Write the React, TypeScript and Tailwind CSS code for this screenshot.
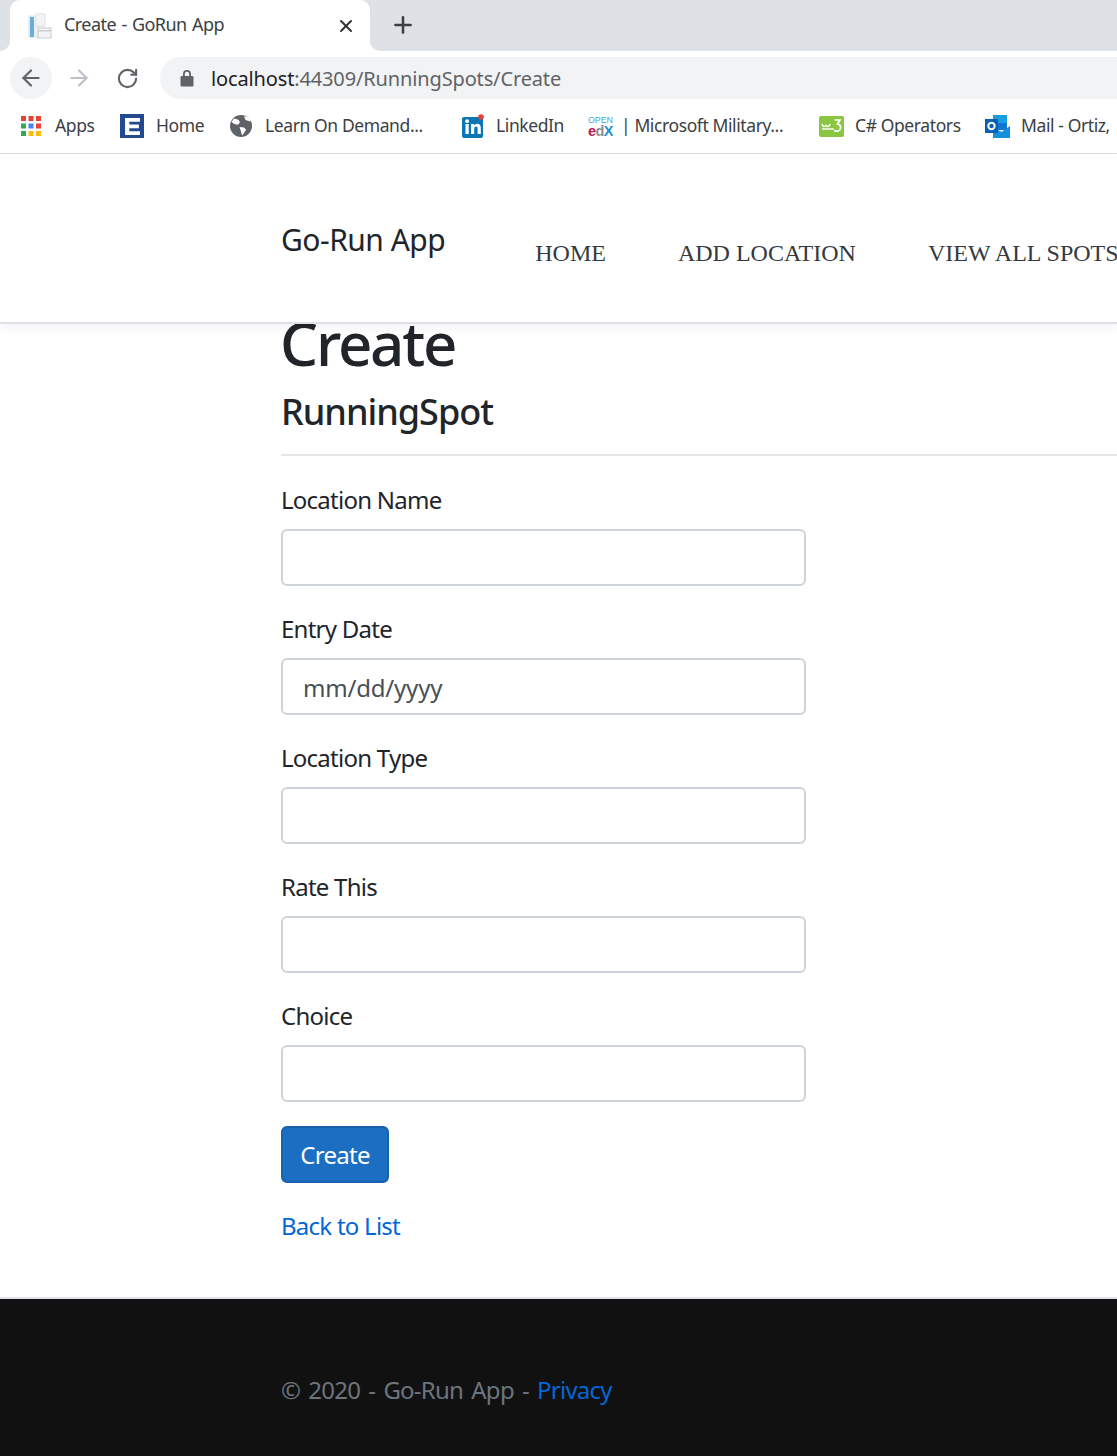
import React from 'react';
import { ArrowLeft, ArrowRight, RotateCw, X, Plus } from 'lucide-react';

const sans = "font-['Noto_Sans',sans-serif]";

const AppsIcon = () => (
  <svg width="20" height="20" viewBox="0 0 20 20">
    {[
      ['#ea4335', '#ea4335', '#ea4335'],
      ['#34a853', '#4285f4', '#ea4335'],
      ['#34a853', '#fbbc05', '#fbbc05'],
    ].map((row, y) =>
      row.map((c, x) => <rect key={`${x}-${y}`} x={x * 7.5} y={y * 7.5} width="5" height="5" fill={c} />)
    )}
  </svg>
);

const HomeIcon = () => (
  <div className="flex h-[24px] w-[24px] items-center justify-center bg-[#234a8f]">
    <svg width="15" height="17" viewBox="0 0 14 16">
      <path d="M0 0h14v3.5H4v2.6h9v3.6H4v2.8h10V16H0z" fill="#fff" />
    </svg>
  </div>
);

const GlobeIcon = () => (
  <svg width="22" height="22" viewBox="0 0 22 22">
    <circle cx="11" cy="11" r="11" fill="#5f6368" />
    <path d="M4 3.500l4.500 1.200 1.500 2.600-2 2.400-3.600-.7L1.500 7zM9.500 12l4.600.6 2 2.200-2.400 3.600-1.600 2-1.400-4.600zM14 1.500l1.500 3.500 4.800 1.600.4-1.600L17 1.600z" fill="#fff" />
  </svg>
);

const LinkedInIcon = () => (
  <svg width="24" height="24" viewBox="0 0 24 24">
    <rect x="1" y="3" width="21" height="21" rx="2" fill="#0a76b4" />
    <rect x="4.500" y="10" width="3.200" height="10" fill="#fff" />
    <circle cx="6.100" cy="7.200" r="1.900" fill="#fff" />
    <path d="M10 10h3v1.500c.7-1.100 1.800-1.800 3.200-1.800 2.600 0 3.600 1.700 3.600 4.400V20h-3.200v-5.200c0-1.300-.4-2.200-1.600-2.200s-1.800 1-1.800 2.300V20H10z" fill="#fff" />
    <circle cx="20" cy="3" r="2.800" fill="#e8413b" />
  </svg>
);

const EdxIcon = () => (
  <svg width="25" height="22" viewBox="0 0 25 22">
    <text x="12.500" y="7.500" textAnchor="middle" fontFamily="'Liberation Sans', sans-serif" fontSize="8.800" fill="#3fa9e0">OPEN</text>
    <text x="0" y="20.500" fontFamily="'Liberation Sans', sans-serif" fontSize="14.500" fontWeight="700" letterSpacing="-0.6">
      <tspan fill="#b3195b">e</tspan>
      <tspan fill="#8f8f8f">d</tspan>
      <tspan fill="#1f8fd6">X</tspan>
    </text>
  </svg>
);

const W3Icon = () => (
  <svg width="25" height="21" viewBox="0 0 25 21">
    <rect width="25" height="21" rx="2" fill="#8ac640" />
    <path d="M3 8c.6 3 2.600 3.200 4 1.400 1.400 1.800 3.400 1.600 4-1.400" fill="none" stroke="#fff" strokeWidth="1.500" />
    <path d="M3 13h12" stroke="#fff" strokeWidth="1.400" />
    <path d="M15.500 4h5.500l-2.600 4c2.200.2 3.200 1.600 3.200 3.400 0 2.300-1.800 3.800-3.900 3.800-1.100 0-2-.3-2.600-.9" fill="none" stroke="#fff" strokeWidth="1.700" />
  </svg>
);

const OutlookIcon = () => (
  <svg width="25" height="23" viewBox="0 0 25 23">
    <rect x="8" y="0" width="14" height="8" fill="#1a9ee0" />
    <rect x="8" y="8" width="14" height="7" fill="#0f78d4" />
    <path d="M8 12l8.500 5L25 11v12H8z" fill="#1490df" />
    <rect x="0" y="4" width="13" height="14" fill="#0a5fb4" />
    <circle cx="6.500" cy="11" r="3.200" fill="none" stroke="#fff" strokeWidth="2" />
  </svg>
);

const TabIcon = () => (
  <svg width="24" height="26" viewBox="0 0 24 26">
    <rect x="1" y="3" width="15" height="21" fill="#eef1f4" stroke="#dcdfe3" />
    <rect x="2" y="4" width="4" height="20" fill="#6aaee0" />
    <rect x="8" y="1" width="9" height="12" fill="#f3f4f6" stroke="#dfe1e4" />
    <rect x="10" y="15" width="13" height="10" fill="#f3f4f6" stroke="#c9cdd2" />
    <rect x="10" y="17" width="13" height="1.500" fill="#c9cdd2" />
  </svg>
);

const bookmarks = [
  { label: 'Apps', icon: <AppsIcon />, box: 'ml-[21px] w-[99px]', gap: 'w-[34px]' },
  { label: 'Home', icon: <HomeIcon />, box: 'w-[110px]', gap: 'w-[36px]' },
  { label: 'Learn On Demand...', icon: <GlobeIcon />, box: 'w-[231px]', gap: 'w-[35px]' },
  { label: 'LinkedIn', icon: <LinkedInIcon />, box: 'w-[127px]', gap: 'w-[35px]' },
  { label: '| Microsoft Military...', icon: <EdxIcon />, box: 'w-[231px]', gap: 'w-[33px]' },
  { label: 'C# Operators', icon: <W3Icon />, box: 'w-[166px]', gap: 'w-[36px]' },
  { label: 'Mail - Ortiz,', icon: <OutlookIcon />, box: 'w-[140px]', gap: 'w-[36px]' },
];

const Chrome = () => (
  <div className={`${sans} bg-white`}>
    {/* tab strip */}
    <div className="flex h-[51px] items-start bg-[#dee1e6] pl-[10px]">
      <div className="relative flex h-[51px] w-[360px] items-center rounded-t-[10px] bg-white pl-[18px] pr-[14px]">
        <div className="absolute bottom-0 left-[-10px] h-[10px] w-[10px] bg-white">
          <div className="h-full w-full rounded-br-[10px] bg-[#dee1e6]" />
        </div>
        <div className="absolute bottom-0 right-[-10px] h-[10px] w-[10px] bg-white">
          <div className="h-full w-full rounded-bl-[10px] bg-[#dee1e6]" />
        </div>
        <TabIcon />
        <span className="ml-[12px] mt-[-2px] whitespace-nowrap text-[18px] tracking-[-0.55px] text-[#3c4043] [word-spacing:1.2px]">Create - GoRun App</span>
        <X className="ml-auto text-[#303336]" size={20} strokeWidth={2.4} />
      </div>
      <Plus className="ml-[20px] mt-[12px] text-[#3c4043]" size={26} strokeWidth={2.4} />
    </div>
    {/* address bar */}
    <div className="flex h-[48px] items-end">
      <div className="ml-[10px] flex h-[42px] w-[42px] items-center justify-center rounded-full bg-[#f1f3f4]">
        <ArrowLeft className="text-[#5f6368]" size={26} strokeWidth={2} />
      </div>
      <div className="ml-[6px] flex h-[42px] w-[42px] items-center justify-center">
        <ArrowRight className="text-[#bdc1c6]" size={26} strokeWidth={2} />
      </div>
      <div className="ml-[6px] flex h-[42px] w-[42px] items-center justify-center">
        <RotateCw className="text-[#5f6368]" size={23} strokeWidth={2.2} />
      </div>
      <div className="ml-[12px] flex h-[42px] flex-1 items-center rounded-l-[21px] bg-[#f1f3f4] pl-[20px]">
        <svg width="14" height="18" viewBox="0 0 14 18">
          <path d="M3 7V5a4 4 0 0 1 8 0v2h1.200c.7 0 1.300.6 1.300 1.300v8c0 .7-.6 1.300-1.300 1.300H1.800c-.7 0-1.300-.6-1.300-1.300v-8C.5 7.600 1.100 7 1.800 7zm1.800 0h4.400V5a2.200 2.200 0 0 0-4.400 0z" fill="#5f6368" />
        </svg>
        <span className="ml-[17px] mt-[2px] whitespace-nowrap text-[20px] tracking-[-0.14px] text-[#202124]">
          localhost<span className="text-[#5f6368]">:44309/RunningSpots/Create</span>
        </span>
      </div>
    </div>
    {/* bookmarks */}
    <div className="flex h-[55px] items-center overflow-hidden border-b border-[#dadce0]">
      {bookmarks.map((b) => (
        <div key={b.label} className={`flex shrink-0 items-center ${b.box}`}>
          <div className={`flex shrink-0 items-center ${b.gap}`}>{b.icon}</div>
          <span className="mt-[-2px] whitespace-nowrap text-[17.5px] tracking-[-0.4px] text-[#3c4043]">{b.label}</span>
        </div>
      ))}
    </div>
  </div>
);

const Field = ({ label, value }: { label: string; value?: string }) => (
  <div className="mb-[26px]">
    <label className="mb-[10px] block h-[36px] text-[24px] leading-[34px] tracking-[-0.75px] text-[#212529]">{label}</label>
    <input
      readOnly
      value={value ?? ''}
      className="block h-[57px] w-[525px] rounded-[6px] border-2 border-[#ced4da] bg-white px-[20px] pt-[2px] text-[24px] tracking-[-0.2px] text-[#495057] outline-none"
    />
  </div>
);

export default function App() {
  return (
    <div className={`${sans} h-[1456px] w-full overflow-hidden bg-[#111111]`}>
      <Chrome />
      <header className="relative z-10 flex h-[170px] items-start border-b-2 border-[#dee2e6] bg-white pl-[281px] shadow-[0_4px_10px_rgba(0,0,0,0.05)]">
        <a className="mt-[65px] whitespace-nowrap text-[30px] leading-[42px] tracking-[-0.5px] text-[#212529]">Go-Run App</a>
        <nav className="ml-[90px] mt-[83px] flex gap-[72px] whitespace-nowrap font-['Liberation_Serif',serif] text-[24px] leading-[32px] text-[#343a40]">
          <a>HOME</a>
          <a>ADD LOCATION</a>
          <a>VIEW ALL SPOTS</a>
        </nav>
      </header>
      <main className="flow-root h-[973px] bg-white pl-[281px]">
        <h1 className="ml-[-1px] mt-[-17px] h-[72px] text-[60px] font-medium leading-[72px] tracking-[-2.2px] text-[#212529]">Create</h1>
        <h4 className="mt-[11px] h-[43px] text-[36px] font-medium leading-[43px] tracking-[-1px] text-[#212529]">RunningSpot</h4>
        <hr className="mb-[27px] mt-[21px] border-t-2 border-[#e5e7e9]" />
        <form>
          <Field label="Location Name" />
          <Field label="Entry Date" value="mm/dd/yyyy" />
          <Field label="Location Type" />
          <Field label="Rate This" />
          <Field label="Choice" />
          <button
            type="button"
            className="mt-[-2px] block h-[57px] w-[108px] rounded-[6px] border-2 border-[#1861ac] bg-[#1b6ec2] text-[24px] tracking-[-0.7px] text-white"
          >
            Create
          </button>
        </form>
        <a className="mt-[25px] block text-[24px] leading-[36px] tracking-[-0.75px] text-[#0366d6]">Back to List</a>
      </main>
      <footer className="h-[158px] border-t-2 border-[#dee2e6] bg-[#111111] pl-[281px] pt-[73px]">
        <p className="whitespace-nowrap text-[24px] leading-[36px] tracking-[-0.75px] text-[#6c757d] [word-spacing:2.6px]">
          © 2020 - Go-Run App - <a className="text-[#0366d6]">Privacy</a>
        </p>
      </footer>
    </div>
  );
}
